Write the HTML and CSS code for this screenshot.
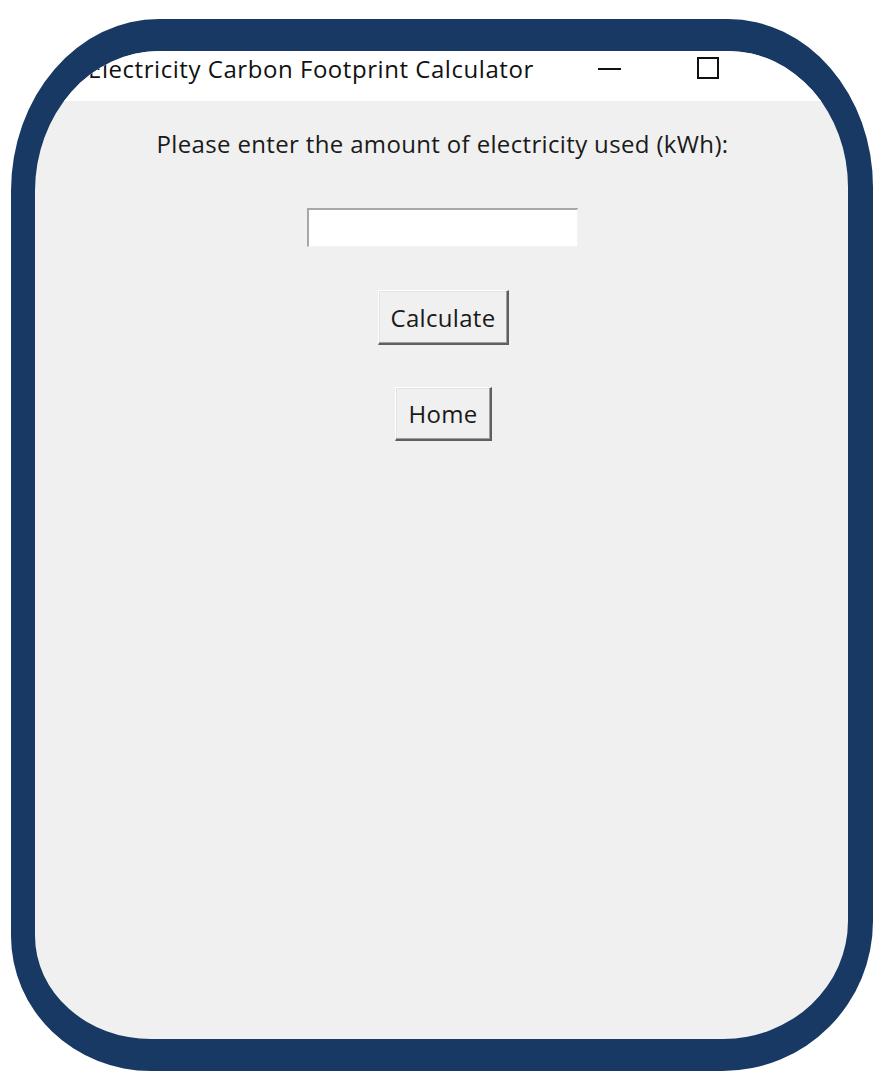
FILE: index.html
```html
<!DOCTYPE html>
<html>
<head>
<meta charset="utf-8">
<link rel="stylesheet" href="styles.css">
</head>
<body>
<div class="frame">
  <div class="titlebar">
    <span class="title">Electricity Carbon Footprint Calculator</span>
    <span class="ctrl-min"></span>
    <span class="ctrl-max"></span>
  </div>
  <div class="content">
    <div class="label">Please enter the amount of electricity used (kWh):</div>
    <div class="entry"></div>
    <div class="btn btn-calc">Calculate</div>
    <div class="btn btn-home">Home</div>
  </div>
</div>
</body>
</html>
```

FILE: styles.css
```css
html, body {
  margin: 0;
  padding: 0;
  background: #ffffff;
}

body {
  font-family: "Open Sans", "Noto Sans", sans-serif;
  color: #1a1a1a;
}

.frame {
  box-sizing: border-box;
  width: 862px;
  height: 1052px;
  margin: 19px 0 0 11px;
  border-style: solid;
  border-color: #173963;
  border-width: 32px 25px 32px 24px;
  border-radius: 148px 145px 150px 140px / 172px 168px 150px 135px;
  background: #f0f0f0;
  overflow: hidden;
  display: flex;
  flex-direction: column;
}

.titlebar {
  height: 50px;
  flex: none;
  background: #ffffff;
  display: flex;
  align-items: flex-start;
  padding-left: 53px;
}

.title {
  font-size: 24px;
  line-height: 30px;
  letter-spacing: 0.55px;
  width: 510px;
  margin-top: 3px;
  white-space: nowrap;
  color: #111;
}

.ctrl-min {
  width: 23px;
  height: 2px;
  background: #111;
  margin-top: 17px;
}

.ctrl-max {
  box-sizing: border-box;
  width: 22px;
  height: 22px;
  border: 2px solid #111;
  margin-left: 76px;
  margin-top: 6px;
}

.content {
  display: flex;
  flex-direction: column;
  align-items: center;
}

.label {
  font-size: 24px;
  line-height: 30px;
  letter-spacing: 0.35px;
  margin-top: 28px;
  margin-left: 2px;
  white-space: nowrap;
}

.entry {
  box-sizing: border-box;
  width: 271px;
  height: 39px;
  margin-top: 49px;
  margin-left: 2px;
  background: #ffffff;
  border-top: 2px solid #a8a8a8;
  border-left: 2px solid #a8a8a8;
  border-right: 1px solid #f4f4f4;
  border-bottom: 1px solid #f4f4f4;
}

.btn {
  box-sizing: border-box;
  display: flex;
  align-items: center;
  justify-content: center;
  font-size: 24px;
  letter-spacing: 0.3px;
  background: #f0f0f0;
  border-top: 1px solid #ffffff;
  border-left: 1px solid #ffffff;
  border-right: 2px solid #5f5f5f;
  border-bottom: 2px solid #5f5f5f;
  box-shadow: inset -1px -1px 0 #a0a0a0, inset 1px 1px 0 #e3e3e3;
}

.btn-calc {
  width: 131px;
  height: 55px;
  margin-top: 43px;
  margin-left: 4px;
}

.btn-home {
  width: 97px;
  height: 54px;
  margin-top: 42px;
  margin-left: 4px;
}
```
